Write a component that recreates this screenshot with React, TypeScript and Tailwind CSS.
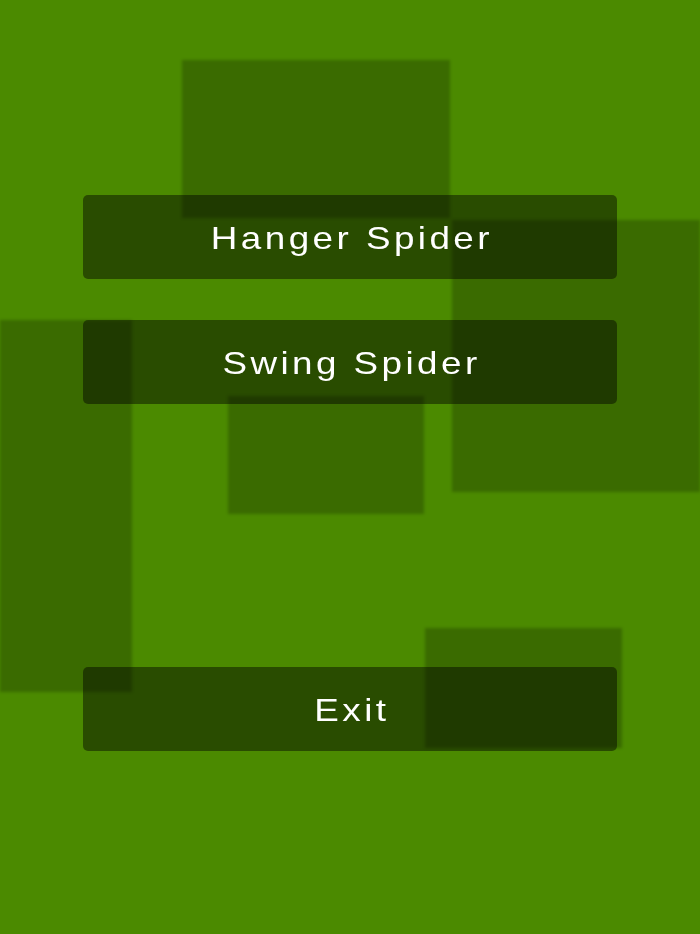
const panels = [
  "left-[182px] top-[60px] w-[268px] h-[158px]",
  "left-0 top-[320px] w-[132px] h-[372px]",
  "left-[228px] top-[396px] w-[196px] h-[118px]",
  "left-[452px] top-[220px] w-[248px] h-[272px]",
  "left-[425px] top-[628px] w-[197px] h-[120px]",
];

function MenuButton({ label }: { label: string }) {
  return (
    <button
      type="button"
      className="flex h-[84px] w-full items-center justify-center rounded-[5px] bg-black/45 pt-[2px] text-white"
    >
      <span className="inline-block scale-x-[1.15] pl-[3px] text-[32px] tracking-[3px]">{label}</span>
    </button>
  );
}

export default function App() {
  return (
    <div
      className="relative h-[934px] w-[700px] overflow-hidden bg-[#4b8a00]"
      style={{ fontFamily: '"Liberation Sans", Arial, sans-serif' }}
    >
      {/* floating background squares */}
      {panels.map((p, i) => (
        <div key={i} className={`absolute ${p} bg-black/[0.22] blur-[1.5px]`} />
      ))}

      <div className="relative flex flex-col px-[83px] pt-[195px]">
        <MenuButton label="Hanger Spider" />
        <div className="mt-[41px]">
          <MenuButton label="Swing Spider" />
        </div>
        <div className="mt-[263px]">
          <MenuButton label="Exit" />
        </div>
      </div>
    </div>
  );
}
